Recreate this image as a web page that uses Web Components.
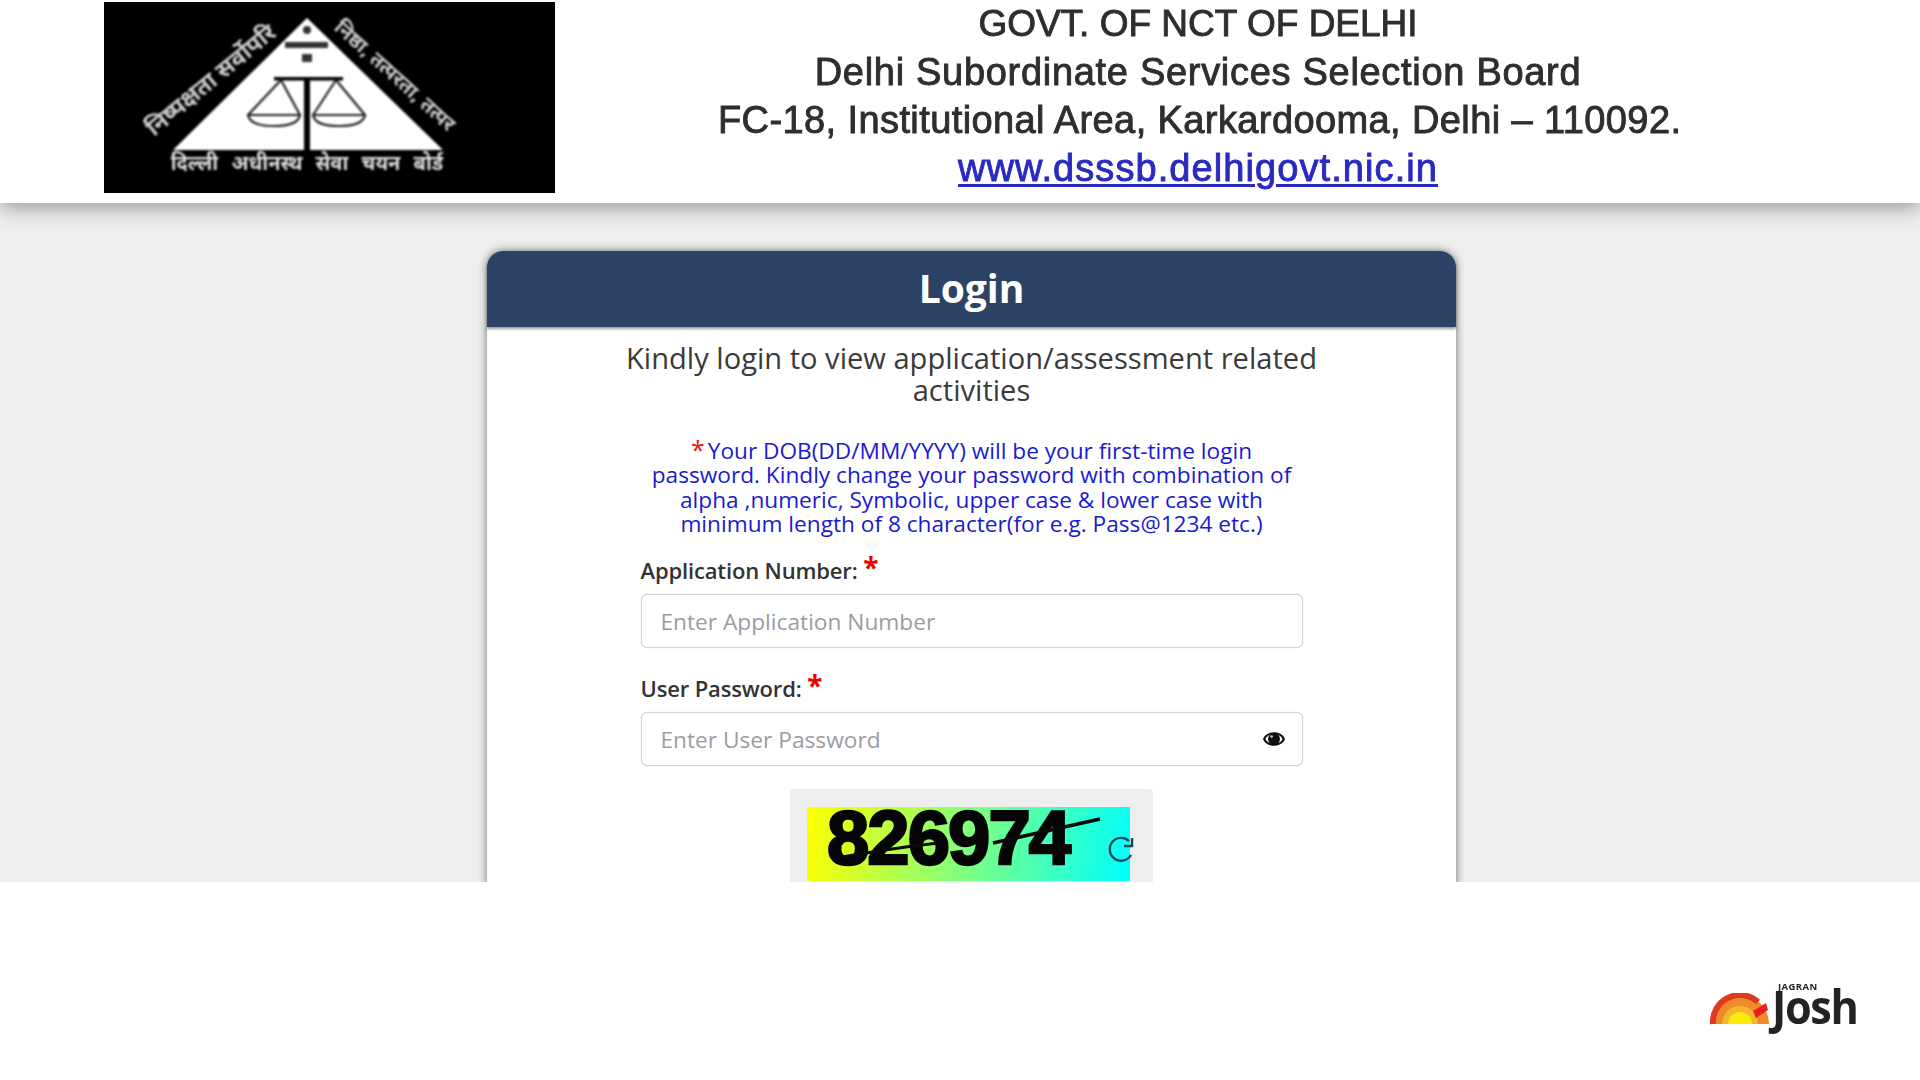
<!DOCTYPE html>
<html lang="en">
<head>
<meta charset="utf-8">
<title>DSSSB Login</title>
<style>
  html, body { margin: 0; padding: 0; background: #ffffff; }
  body { font-family: "Open Sans", "Liberation Sans", sans-serif; }
</style>
</head>
<body>
<board-page>
  <board-header></board-header>
  <login-card>
    <form-field label="Application Number:" placeholder="Enter Application Number"></form-field>
    <form-field label="User Password:" placeholder="Enter User Password" eye></form-field>
    <captcha-box code="826974"></captcha-box>
  </login-card>
</board-page>
<josh-footer></josh-footer>

<script>
class BoardPage extends HTMLElement {
  constructor() {
    super();
    this.attachShadow({ mode: 'open' });
    this.shadowRoot.innerHTML = `
      <style>
        :host { display: block; height: 882px; overflow: hidden; background: #eeeeee; }
      </style>
      <slot></slot>
    `;
  }
}

class BoardHeader extends HTMLElement {
  constructor() {
    super();
    this.attachShadow({ mode: 'open' });
    this.shadowRoot.innerHTML = `
      <style>
        :host {
          display: flex;
          height: 203px;
          background: #ffffff;
          box-shadow: 0 4px 20px rgba(0, 0, 0, .38);
          position: relative;
          padding-left: 104px;
          box-sizing: border-box;
        }
        .logo { width: 451px; height: 191px; margin-top: 2px; display: block; flex: none; }
        .logo .soft { filter: blur(1.1px); }
        .lines {
          flex: none;
          width: 960px;
          padding: 0 0 0 163px;
          text-align: center;
          font-family: "Liberation Sans", Arial, sans-serif;
          font-size: 38px;
          line-height: 47.6px;
          color: #2e2e2e;
          -webkit-text-stroke: .9px #2e2e2e;
          filter: blur(.6px);
          white-space: nowrap;
        }
        .l1 { font-size: 37px; }
        .l2 { letter-spacing: .7px; margin-top: 1px; }
        .l3 { letter-spacing: .4px; margin-top: 1px; }
        a {
          display: inline-block; line-height: 42px; letter-spacing: 1.08px;
          color: #2a2ac0; -webkit-text-stroke: .9px #2a2ac0;
          text-decoration: underline; text-decoration-thickness: 3px; text-underline-offset: 3px;
        }
      </style>
      <svg class="logo" viewBox="0 0 451 191" aria-hidden="true">
        <rect width="451" height="191" fill="#000"/>
        <g class="soft">
          <polygon points="203,16 69,148 339,148" fill="#fff"/>
          <circle cx="203" cy="28" r="4" fill="#333"/>
          <rect x="181" y="40" width="43" height="6" fill="#333"/>
          <rect x="198" y="52" width="10" height="8" fill="#333"/>
          <rect x="200" y="76" width="6" height="72" fill="#000"/>
          <rect x="170" y="75" width="69" height="3.5" fill="#000"/>
          <g fill="none" stroke="#222" stroke-width="2.2">
            <path d="M177 78 L144 113 M177 78 L196 113"/>
            <path d="M144 113 H196 Q194 124 170 124 Q146 124 144 113 Z"/>
            <path d="M232 78 L209 113 M232 78 L261 113"/>
            <path d="M209 113 H261 Q259 124 235 124 Q211 124 209 113 Z"/>
          </g>
          <g font-family="'Noto Sans', 'DejaVu Sans', sans-serif" font-weight="700">
            <text x="203" y="168" font-size="20" text-anchor="middle" word-spacing="8" fill="#ddd">दिल्ली अधीनस्थ सेवा चयन बोर्ड</text>
            <text font-size="23.5" transform="translate(50 135) rotate(-39.5)" fill="#ccc">निष्पक्षता सर्वोपरि</text>
            <text font-size="20" transform="translate(229 27) rotate(42)" fill="#ccc">निष्ठा, तत्परता, तत्पर</text>
          </g>
        </g>
      </svg>
      <div class="lines">
        <div class="l1">GOVT. OF NCT OF DELHI</div>
        <div class="l2">Delhi Subordinate Services Selection Board</div>
        <div class="l3">FC-18, Institutional Area, Karkardooma, Delhi – 110092.</div>
        <a>www.dsssb.delhigovt.nic.in</a>
      </div>
    `;
  }
}

class LoginCard extends HTMLElement {
  constructor() {
    super();
    this.attachShadow({ mode: 'open' });
    this.shadowRoot.innerHTML = `
      <style>
        :host {
          display: block;
          width: 969px;
          margin: 48px 0 0 487px;
          background: #ffffff;
          border-radius: 16px 16px 0 0;
          box-shadow: 0 0 9px rgba(0, 0, 0, .55);
          color: #333333;
          height: 700px;
        }
        .title {
          height: 76px;
          background: #2c4365;
          border-radius: 16px 16px 0 0;
          box-shadow: 0 2px 3px rgba(0, 0, 0, .4);
          color: #ffffff;
          font-size: 39px;
          font-weight: 700;
          line-height: 73px;
          text-align: center;
        }
        .lead {
          width: 720px;
          margin: 16px auto 0;
          font-size: 29.1px;
          line-height: 31.5px;
          color: #3a3a3a;
          text-align: center;
        }
        .note {
          width: 662px;
          margin: 32.5px auto 0;
          font-size: 22.65px;
          line-height: 24.6px;
          color: #1a1ad0;
          text-align: center;
        }
        .note b { color: #ee1111; font-weight: 400; font-size: 25px; line-height: 20px; margin-right: 3px; }
        .fields { width: 662px; margin: 10px auto 0; }
      </style>
      <div class="title">Login</div>
      <div class="lead">Kindly login to view application/assessment related activities</div>
      <div class="note"><b>*</b>Your DOB(DD/MM/YYYY) will be your first-time login password. Kindly change your password with combination of alpha ,numeric, Symbolic, upper case &amp; lower case with minimum length of 8 character(for e.g. Pass@1234 etc.)</div>
      <div class="fields"><slot></slot></div>
    `;
  }
}

class FormField extends HTMLElement {
  constructor() {
    super();
    this.attachShadow({ mode: 'open' });
  }
  connectedCallback() {
    const label = this.getAttribute('label');
    const placeholder = this.getAttribute('placeholder');
    const eye = this.hasAttribute('eye') ? `
      <svg class="eye" viewBox="0 0 24 22" aria-hidden="true">
        <path d="M1 11 C4 2 20 2 23 11 C20 20 4 20 1 11 Z M3.4 11 C6 17.4 18 17.4 20.6 11 C18 4.6 6 4.6 3.4 11 Z" fill="#111" fill-rule="evenodd"/>
        <circle cx="12" cy="11" r="6" fill="#111"/>
        <circle cx="9.6" cy="8.6" r="1.4" fill="#bbb"/>
      </svg>` : '';
    this.shadowRoot.innerHTML = `
      <style>
        :host { display: block; margin-bottom: 16.5px; }
        label { display: block; height: 42px; margin-bottom: 5.5px; font-size: 22px; font-weight: 600; line-height: 42px; color: #333; letter-spacing: -.15px; white-space: nowrap; }
        label span { color: #f00000; font-size: 28px; font-weight: 700; position: relative; top: -1px; }
        .box {
          display: flex; align-items: center; justify-content: space-between;
          height: 54px; box-sizing: border-box;
          padding: 0 16px 0 19px;
          border: 1px solid #d4d4d4; border-radius: 6px;
          box-shadow: 0 0 1px rgba(0,0,0,.2);
          background: #fff; color: #999da1; font-size: 22.7px;
        }
        .eye { width: 24px; height: 22px; }
      </style>
      <label>${label} <span>*</span></label>
      <div class="box">${placeholder}${eye}</div>
    `;
  }
}

class CaptchaBox extends HTMLElement {
  constructor() {
    super();
    this.attachShadow({ mode: 'open' });
  }
  connectedCallback() {
    this.shadowRoot.innerHTML = `
      <style>
        :host { display: block; width: 363px; margin: 22.5px auto 0; background: #eeeeef; border-radius: 3px 3px 0 0; padding: 18px 0 0 17px; box-sizing: border-box; position: relative; height: 100px; }
        .img {
          width: 323px; height: 74px; position: relative;
          background: linear-gradient(100deg, #ffff00 0%, #00ffff 100%);
        }
        .code {
          display: block; padding-left: 20px;
          font-family: "Liberation Sans", Arial, sans-serif; font-weight: 700; font-size: 76px; line-height: 62px;
          letter-spacing: -1.9px; color: #050505; -webkit-text-stroke: 2.6px #050505; filter: blur(.5px);
        }
        svg { position: absolute; left: 0; top: 0; width: 363px; height: 100px; }
      </style>
      <div class="img"><span class="code">${this.getAttribute('code')}</span></div>
      <svg viewBox="0 0 363 100" aria-hidden="true">
        <path d="M203 54 L310 30" stroke="#0a0a0a" stroke-width="3.5" fill="none"/>
        <path d="M52 68 Q110 58 150 54" stroke="#0a0a0a" stroke-width="3" fill="none"/>
        <path d="M341 66 A11.4 11.4 0 1 1 339 52" stroke="#0d4a55" stroke-width="2.4" fill="none"/>
        <path d="M342 49 V57 H334" stroke="#0d4a55" stroke-width="2.4" fill="none"/>
      </svg>
    `;
  }
}

class JoshFooter extends HTMLElement {
  constructor() {
    super();
    this.attachShadow({ mode: 'open' });
    this.shadowRoot.innerHTML = `
      <style>
        :host { display: flex; justify-content: flex-end; height: 198px; background: #ffffff; padding: 97px 62px 0 0; box-sizing: border-box; }
        .mark { display: flex; align-items: flex-end; gap: 2px; height: 54px; filter: blur(.3px); }
        svg { width: 60px; height: 32px; margin-bottom: 8px; }
        .word { display: flex; flex-direction: column; color: #232323; width: 86px; margin-bottom: 5px; }
        .jagran { font: 700 9.5px/10px "Open Sans", sans-serif; letter-spacing: .4px; padding-left: 6px; }
        .josh { font: 700 47px/44px "Open Sans", sans-serif; letter-spacing: -1.5px; margin-top: -8px; transform: scaleX(.92); transform-origin: 0 0; white-space: nowrap; }
      </style>
      <div class="mark">
        <svg viewBox="0 0 60 32" aria-hidden="true">
          <path d="M1 31 A29 29 0 0 1 59 31 Z" fill="#ef8a2a"/>
          <path d="M3 31 A27 27 0 0 1 48 9" stroke="#e03a1e" stroke-width="6" fill="none"/>
          <path d="M12 31 A18 18 0 0 1 48 31 Z" fill="#f5b62f"/>
          <path d="M18 31 A12 12 0 0 1 42 31 Z" fill="#fde90a"/>
          <path d="M43 18 L56 10 L58 17 L46 25 Z" fill="#e8201c"/>
        </svg>
        <div class="word"><span class="jagran">JAGRAN</span><span class="josh">Josh</span></div>
      </div>
    `;
  }
}

customElements.define('board-page', BoardPage);
customElements.define('board-header', BoardHeader);
customElements.define('login-card', LoginCard);
customElements.define('form-field', FormField);
customElements.define('captcha-box', CaptchaBox);
customElements.define('josh-footer', JoshFooter);
</script>
</body>
</html>
